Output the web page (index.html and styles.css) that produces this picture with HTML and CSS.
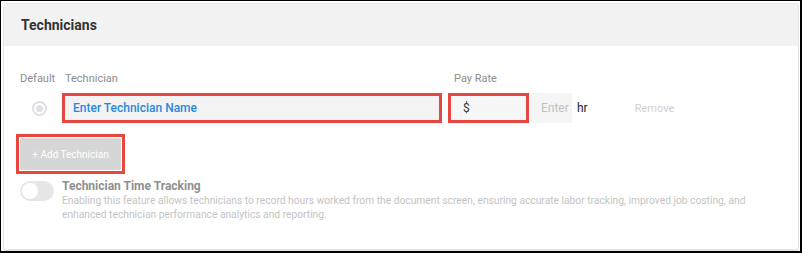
FILE: index.html
```html
<!DOCTYPE html>
<html lang="en">
<head>
    <meta charset="UTF-8">
    <title>Technicians</title>
    <link rel="stylesheet" href="styles.css">
</head>
<body>
    <div class="frame">
        <div class="card">
            <div class="card-header">
                <h2>Technicians</h2>
            </div>
            <div class="card-body">
                <div class="labels">
                    <span class="col-default">Default</span>
                    <span class="col-name">Technician</span>
                    <span class="col-rate">Pay Rate</span>
                </div>
                <div class="tech-row">
                    <div class="col-default">
                        <span class="radio"></span>
                    </div>
                    <div class="col-name highlight">
                        <div class="name-input">Enter Technician Name</div>
                    </div>
                    <div class="rate">
                        <div class="highlight">
                            <div class="rate-addon">$</div>
                        </div>
                        <div class="rate-input">Enter</div>
                    </div>
                    <span class="unit">hr</span>
                    <span class="remove">Remove</span>
                </div>
                <div class="highlight add-wrap">
                    <button class="btn-add" type="button">+ Add Technician</button>
                </div>
                <div class="tracking">
                    <span class="toggle"><span class="knob"></span></span>
                    <div class="tracking-text">
                        <div class="tracking-title">Technician Time Tracking</div>
                        <p>Enabling this feature allows technicians to record hours worked from the document screen, ensuring accurate labor tracking, improved job costing, and enhanced technician performance analytics and reporting.</p>
                    </div>
                </div>
            </div>
        </div>
    </div>
</body>
</html>
```

FILE: styles.css
```css
:root {
    --clr-red: #e8473f;
    --clr-blue: #2b88dc;
    --clr-field: #f3f3f3;
    --clr-muted: #8c8c8c;
}

* {
    box-sizing: border-box;
    margin: 0;
    padding: 0;
}

body {
    font-family: Roboto, 'Liberation Sans', sans-serif;
    background: #fff;
    color: #333;
}

.frame {
    width: 802px;
    height: 253px;
    border: 1px solid #000;
    border-right-width: 2px;
    border-bottom-width: 2px;
    padding: 2px 1px 0 2px;
}

.card {
    border: 1px solid #e6e6e6;
    border-radius: 3px;
    box-shadow: 0 1px 0 #dedede;
    height: 247px;
    overflow: hidden;
}

.card-header {
    background: #f2f2f2;
    height: 42px;
    padding: 0 17px;
    display: flex;
    align-items: center;
}

.card-header h2 {
    font-size: 14px;
    font-weight: 700;
    color: #333;
}

.card-body {
    padding: 26px 12px 0 12px;
}

.labels {
    display: flex;
    font-size: 11px;
    line-height: 13px;
    color: var(--clr-muted);
    margin-bottom: 8px;
}

.col-default {
    width: 46px;
    padding-left: 4px;
    flex-shrink: 0;
}

.labels .col-name {
    width: 392px;
    padding-left: 3px;
}

.tech-row {
    display: flex;
    align-items: center;
    height: 30px;
}

.tech-row .col-default {
    display: flex;
    justify-content: center;
    padding-left: 0;
}

.radio {
    width: 15px;
    height: 15px;
    border-radius: 50%;
    border: 2px solid #e0e0e4;
    background: #fff;
    display: flex;
    align-items: center;
    justify-content: center;
}

.radio::after {
    content: "";
    width: 7px;
    height: 7px;
    border-radius: 50%;
    background: #dfdfe5;
}

.highlight {
    border: 3px solid var(--clr-red);
}

.col-name.highlight {
    width: 380px;
    height: 30px;
}

.name-input {
    height: 24px;
    background: var(--clr-field);
    padding-left: 8px;
    font-size: 12px;
    font-weight: 500;
    line-height: 24px;
    color: var(--clr-blue);
}

.rate {
    display: flex;
    margin-left: 6px;
    height: 30px;
}

.rate-addon {
    width: 75px;
    height: 24px;
    background: #f7f7f7;
    padding-left: 12px;
    font-size: 12px;
    line-height: 24px;
    color: #333;
}

.rate-input {
    width: 43px;
    height: 30px;
    background: #f5f5f5;
    padding-left: 12px;
    font-size: 12px;
    line-height: 30px;
    color: #c2c2c2;
    overflow: hidden;
}

.unit {
    margin-left: 5px;
    font-size: 12px;
    color: #222;
}

.remove {
    margin-left: 47px;
    font-size: 11px;
    color: #cfcfcf;
}

.add-wrap {
    display: inline-block;
    margin-top: 11px;
    padding: 1px;
}

.btn-add {
    display: block;
    width: 101px;
    height: 32px;
    border: none;
    border-radius: 2px;
    background: #d6d6d6;
    color: #fff;
    font-family: inherit;
    font-size: 10px;
}

.tracking {
    display: flex;
    gap: 8px;
    margin-top: 5px;
    padding-left: 4px;
}

.toggle {
    flex-shrink: 0;
    width: 34px;
    height: 20px;
    margin-top: 2px;
    border-radius: 10px;
    background: #e6e6e6;
    padding: 2px;
}

.knob {
    display: block;
    width: 16px;
    height: 16px;
    border-radius: 50%;
    background: #fff;
}

.tracking-title {
    font-size: 12px;
    font-weight: 700;
    line-height: 15px;
    color: #8f8f8f;
}

.tracking-text p {
    font-size: 10.25px;
    line-height: 14px;
    color: #c4c4c4;
}
```
